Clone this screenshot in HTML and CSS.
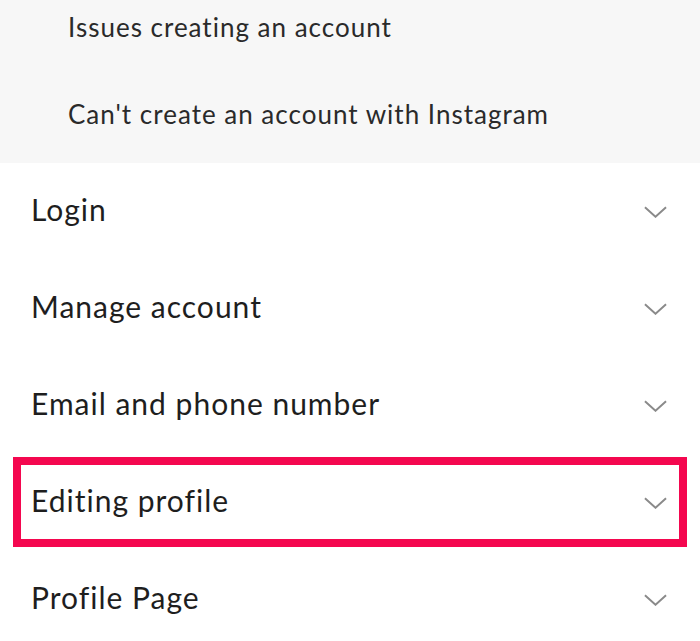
FILE: index.html
```html
<!DOCTYPE html>
<html lang="en">
<head>
  <meta charset="UTF-8" />
  <title>Help Center - Account</title>
  <link rel="stylesheet" href="styles.css">
</head>
<body>
  <div class="sub-list">
    <div class="sub-item">Issues creating an account</div>
    <div class="sub-item">Can't create an account with Instagram</div>
  </div>

  <div class="topic-list">
    <div class="topic">
      <span>Login</span>
      <svg class="chevron" viewBox="0 0 24 12"><path d="M1 1 L12 11 L23 1" /></svg>
    </div>
    <div class="topic">
      <span>Manage account</span>
      <svg class="chevron" viewBox="0 0 24 12"><path d="M1 1 L12 11 L23 1" /></svg>
    </div>
    <div class="topic">
      <span>Email and phone number</span>
      <svg class="chevron" viewBox="0 0 24 12"><path d="M1 1 L12 11 L23 1" /></svg>
    </div>
    <div class="topic highlighted">
      <span>Editing profile</span>
      <svg class="chevron" viewBox="0 0 24 12"><path d="M1 1 L12 11 L23 1" /></svg>
    </div>
    <div class="topic">
      <span>Profile Page</span>
      <svg class="chevron" viewBox="0 0 24 12"><path d="M1 1 L12 11 L23 1" /></svg>
    </div>
  </div>
</body>
</html>
```

FILE: styles.css
```css
body {
  margin: 0;
  background: #fff;
  font-family: Lato, "Open Sans", sans-serif;
  overflow: hidden;
}
.sub-list {
  background: #f7f7f7;
  margin-top: -15px;
  padding-bottom: 4px;
}
.sub-item {
  height: 87px;
  box-sizing: border-box;
  display: flex;
  align-items: center;
  padding: 0 0 3px 68px;
  font-size: 26px;
  letter-spacing: 1px;
  color: #2a2a2a;
}
.topic {
  height: 97px;
  box-sizing: border-box;
  display: flex;
  align-items: center;
  justify-content: space-between;
  padding: 0 33px 6px 31px;
  font-size: 30px;
  letter-spacing: 1px;
  color: #1e1e1e;
}
.topic.highlighted {
  height: 90px;
  margin: 3px 13px 4px;
  border: 8px solid #f4074f;
  padding: 0 12px 4px 10px;
}
.chevron {
  width: 23px;
  height: 12px;
  margin-top: 6px;
  fill: none;
  stroke: #8a8a8a;
  stroke-width: 2;
}
```
